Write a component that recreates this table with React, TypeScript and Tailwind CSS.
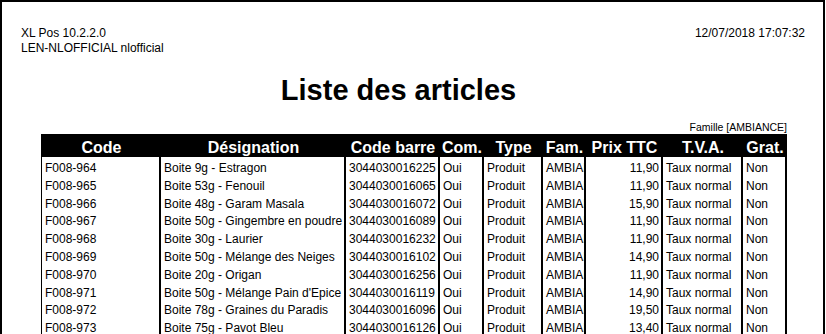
import React from 'react';

type Article = {
  code: string;
  designation: string;
  barcode: string;
  price: string;
};

const articles: Article[] = [
  { code: 'F008-964', designation: 'Boite 9g - Estragon', barcode: '3044030016225', price: '11,90' },
  { code: 'F008-965', designation: 'Boite 53g - Fenouil', barcode: '3044030016065', price: '11,90' },
  { code: 'F008-966', designation: 'Boite 48g - Garam Masala', barcode: '3044030016072', price: '15,90' },
  { code: 'F008-967', designation: 'Boite 50g - Gingembre en poudre', barcode: '3044030016089', price: '11,90' },
  { code: 'F008-968', designation: 'Boite 30g - Laurier', barcode: '3044030016232', price: '11,90' },
  { code: 'F008-969', designation: 'Boite 50g - Mélange des Neiges', barcode: '3044030016102', price: '14,90' },
  { code: 'F008-970', designation: 'Boite 20g - Origan', barcode: '3044030016256', price: '11,90' },
  { code: 'F008-971', designation: "Boite 50g - Mélange Pain d'Epice", barcode: '3044030016119', price: '14,90' },
  { code: 'F008-972', designation: 'Boite 78g - Graines du Paradis', barcode: '3044030016096', price: '19,50' },
  { code: 'F008-973', designation: 'Boite 75g - Pavot Bleu', barcode: '3044030016126', price: '13,40' },
  { code: 'F008-974', designation: 'Boite 45g - Piment doux', barcode: '3044030016133', price: '11,90' },
];

const headers = ['Code', 'Désignation', 'Code barre', 'Com.', 'Type', 'Fam.', 'Prix TTC', 'T.V.A.', 'Grat.'];

const cols = 'grid grid-cols-[119px_185px_94px_44px_59px_43px_77px_80px_44px]';
const cell = 'border-r-2 border-black overflow-hidden whitespace-nowrap pl-[3px]';

export default function App() {
  return (
    <div
      className="w-[825px] h-[334px] overflow-hidden bg-white text-black border-t-2 border-l-2 border-r-2 border-black"
      style={{ fontFamily: '"Liberation Sans", Arial, sans-serif' }}
    >
      {/* report header */}
      <div className="flex justify-between pt-[24px] pl-[19px] pr-[18px] text-[12px] leading-[15px]">
        <div>
          <div>XL Pos 10.2.2.0</div>
          <div>LEN-NLOFFICIAL nlofficial</div>
        </div>
        <div>12/07/2018 17:07:32</div>
      </div>

      <div className="flex justify-center pr-[28px] mt-[20px]">
        <h1 className="text-[29px] leading-[29px] font-bold">Liste des articles</h1>
      </div>

      <div className="ml-[39px] w-[746px] mt-[16px]">
        <div className="text-right text-[10.5px] leading-[12px] pr-[0px]">Famille [AMBIANCE]</div>

        {/* column titles */}
        <div className={`${cols} mt-[1px] bg-black text-white font-bold text-[16px] h-[23px] pl-px`}>
          {headers.map((h) => (
            <div key={h} className="text-center whitespace-nowrap pt-[4px] leading-[19px]">
              {h}
            </div>
          ))}
        </div>

        {/* rows */}
        <div className="border-l border-black text-[12px] leading-[17.8px]">
          <div className={`${cols} h-[3px]`}>
            {headers.map((h) => (
              <div key={h} className="border-r-2 border-black" />
            ))}
          </div>
          {articles.map((a) => (
            <div key={a.code} className={cols}>
              <div className={cell}>{a.code}</div>
              <div className={cell}>{a.designation}</div>
              <div className={`${cell} pl-[2px]`}>{a.barcode}</div>
              <div className={`${cell} pl-[2px]`}>Oui</div>
              <div className={cell}>Produit</div>
              <div className={`${cell} pl-[2px]`}>AMBIANCE</div>
              <div className={`${cell} text-right pr-[2px]`}>{a.price}</div>
              <div className={cell}>Taux normal</div>
              <div className={`${cell} pl-[2px]`}>Non</div>
            </div>
          ))}
        </div>
      </div>
    </div>
  );
}
